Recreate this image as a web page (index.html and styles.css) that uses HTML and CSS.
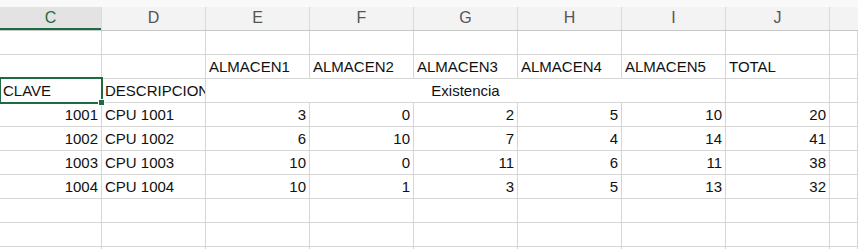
FILE: index.html
```html
<!DOCTYPE html>
<html lang="es">
<head>
<meta charset="utf-8">
<title>Existencias</title>
<link rel="stylesheet" href="styles.css">
</head>
<body>
<div class="sheet">
  <div class="topbar"></div>
  <div class="colheads">
    <div class="ch ch-first sel">C</div>
    <div class="ch">D</div>
    <div class="ch">E</div>
    <div class="ch">F</div>
    <div class="ch">G</div>
    <div class="ch">H</div>
    <div class="ch">I</div>
    <div class="ch">J</div>
    <div class="ch ch-rest"></div>
  </div>
  <div class="grid">
    <!-- fila 2 -->
    <div class="c"></div><div class="c"></div><div class="c"></div><div class="c"></div><div class="c"></div><div class="c"></div><div class="c"></div><div class="c"></div><div class="c"></div>
    <!-- fila 3 -->
    <div class="c"></div><div class="c"></div>
    <div class="c">ALMACEN1</div><div class="c">ALMACEN2</div><div class="c">ALMACEN3</div><div class="c">ALMACEN4</div><div class="c">ALMACEN5</div><div class="c">TOTAL</div><div class="c"></div>
    <!-- fila 4 -->
    <div class="c active">CLAVE<span class="handle"></span></div>
    <div class="c clip">DESCRIPCION</div>
    <div class="c merged">Existencia</div>
    <div class="c"></div><div class="c"></div>
    <!-- datos -->
    <div class="c n">1001</div><div class="c">CPU 1001</div><div class="c n">3</div><div class="c n">0</div><div class="c n">2</div><div class="c n">5</div><div class="c n">10</div><div class="c n">20</div><div class="c"></div>
    <div class="c n">1002</div><div class="c">CPU 1002</div><div class="c n">6</div><div class="c n">10</div><div class="c n">7</div><div class="c n">4</div><div class="c n">14</div><div class="c n">41</div><div class="c"></div>
    <div class="c n">1003</div><div class="c">CPU 1003</div><div class="c n">10</div><div class="c n">0</div><div class="c n">11</div><div class="c n">6</div><div class="c n">11</div><div class="c n">38</div><div class="c"></div>
    <div class="c n">1004</div><div class="c">CPU 1004</div><div class="c n">10</div><div class="c n">1</div><div class="c n">3</div><div class="c n">5</div><div class="c n">13</div><div class="c n">32</div><div class="c"></div>
    <!-- filas vacías -->
    <div class="c"></div><div class="c"></div><div class="c"></div><div class="c"></div><div class="c"></div><div class="c"></div><div class="c"></div><div class="c"></div><div class="c"></div>
    <div class="c"></div><div class="c"></div><div class="c"></div><div class="c"></div><div class="c"></div><div class="c"></div><div class="c"></div><div class="c"></div><div class="c"></div>
    <div class="c"></div><div class="c"></div><div class="c"></div><div class="c"></div><div class="c"></div><div class="c"></div><div class="c"></div><div class="c"></div><div class="c"></div>
  </div>
</div>
</body>
</html>
```
FILE: styles.css
```css
html, body {
  margin: 0;
  padding: 0;
  background: #ffffff;
  overflow: hidden;
}

.sheet {
  width: 858px;
  height: 249px;
  overflow: hidden;
  font-family: "Liberation Sans", Arial, sans-serif;
  font-size: 15px;
  color: #111;
}

.topbar {
  height: 7px;
  background: #f9f9f9;
}

.colheads {
  display: grid;
  grid-template-columns: 102px repeat(7, 104px) 1fr;
  height: 23px;
  background: #f3f3f3;
  border-bottom: 1px solid #c8c8c8;
}

.ch {
  display: flex;
  align-items: center;
  justify-content: center;
  border-right: 1px solid #dadada;
  color: #555555;
  font-size: 16px;
  padding-bottom: 1px;
}

.ch.sel {
  background: #e3e3e3;
  color: #1e6b40;
  box-shadow: inset 0 -2px 0 #1f6b41;
}

.ch-rest {
  border-right: none;
}

.grid {
  display: grid;
  grid-template-columns: 102px repeat(7, 104px) 1fr;
  grid-auto-rows: 24px;
}

.c {
  position: relative;
  border-right: 1px solid #d6d6d6;
  border-bottom: 1px solid #d6d6d6;
  padding: 0 3px;
  line-height: 23px;
  white-space: nowrap;
}

.n {
  text-align: right;
}

.clip {
  overflow: hidden;
  text-overflow: clip;
  padding-right: 0;
}

.merged {
  grid-column: span 5;
  text-align: center;
}

.active {
  overflow: visible;
}

.active::after {
  content: "";
  position: absolute;
  left: -1px;
  top: -2px;
  right: -2px;
  bottom: -2px;
  border: 2px solid #1f6b41;
  pointer-events: none;
}

.handle {
  position: absolute;
  right: -4px;
  bottom: -4px;
  width: 5px;
  height: 5px;
  background: #1f6b41;
  border: 1px solid #ffffff;
  z-index: 2;
}
```
